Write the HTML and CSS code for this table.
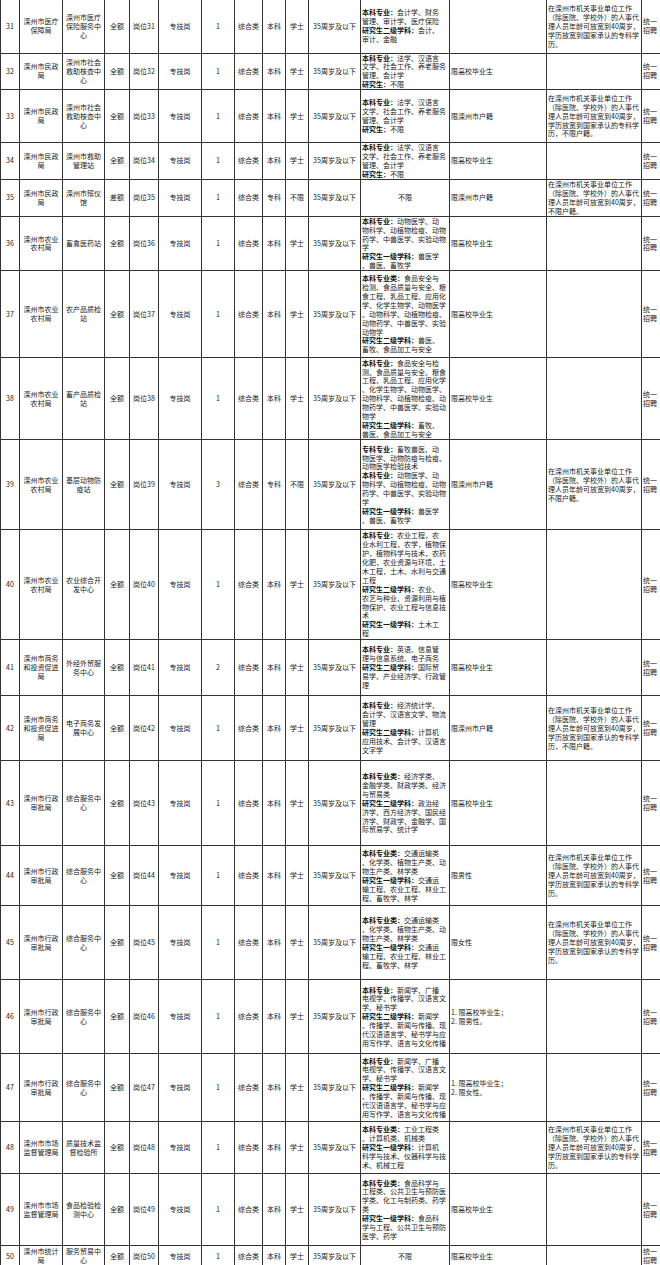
FILE: index.html
```html
<!DOCTYPE html>
<html lang="zh">
<head>
<meta charset="utf-8">
<title>岗位表</title>
<link rel="stylesheet" href="styles.css">
</head>
<body>
<table class="t">
<colgroup>
<col class="w19"><col class="w43"><col class="w42"><col class="w25"><col class="w29"><col class="w43"><col class="w33"><col class="w28"><col class="w23"><col class="w23"><col class="w52"><col class="w89"><col class="w97"><col class="w95"><col class="w19">
</colgroup>
<tr class="h53">
<td>31</td><td>滦州市医疗<br>保障局</td><td>滦州市医疗<br>保险服务中<br>心</td><td>全额</td><td>岗位31</td><td>专技岗</td><td>1</td><td>综合类</td><td>本科</td><td>学士</td><td>35周岁及以下</td>
<td class="l"><b>本科专业：</b>会计学、财务<br>管理、审计学、医疗保险<br><b>研究生二级学科：</b>会计、<br>审计、金融</td>
<td class="l"></td>
<td class="l">在滦州市机关事业单位工作<br>（除医院、学校外）的人事代<br>理人员年龄可放宽到40周岁，<br>学历放宽到国家承认的专科学<br>历。</td>
<td class="l">统一<br>招聘</td>
</tr>
<tr class="h35">
<td>32</td><td>滦州市民政<br>局</td><td>滦州市社会<br>救助核查中<br>心</td><td>全额</td><td>岗位32</td><td>专技岗</td><td>1</td><td>综合类</td><td>本科</td><td>学士</td><td>35周岁及以下</td>
<td class="l"><b>本科专业：</b>法学、汉语言<br>文学、社会工作、养老服务<br>管理、会计学<br><b>研究生：</b>不限</td>
<td class="l">限高校毕业生</td>
<td class="l"></td>
<td class="l">统一<br>招聘</td>
</tr>
<tr class="h53">
<td>33</td><td>滦州市民政<br>局</td><td>滦州市社会<br>救助核查中<br>心</td><td>全额</td><td>岗位33</td><td>专技岗</td><td>1</td><td>综合类</td><td>本科</td><td>学士</td><td>35周岁及以下</td>
<td class="l"><b>本科专业：</b>法学、汉语言<br>文学、社会工作、养老服务<br>管理、会计学<br><b>研究生：</b>不限</td>
<td class="l">限滦州市户籍</td>
<td class="l">在滦州市机关事业单位工作<br>（除医院、学校外）的人事代<br>理人员年龄可放宽到40周岁，<br>学历放宽到国家承认的专科学<br>历，不限户籍。</td>
<td class="l">统一<br>招聘</td>
</tr>
<tr class="h36">
<td>34</td><td>滦州市民政<br>局</td><td>滦州市救助<br>管理站</td><td>全额</td><td>岗位34</td><td>专技岗</td><td>1</td><td>综合类</td><td>本科</td><td>学士</td><td>35周岁及以下</td>
<td class="l"><b>本科专业：</b>法学、汉语言<br>文学、社会工作、养老服务<br>管理、会计学<br><b>研究生：</b>不限</td>
<td class="l">限高校毕业生</td>
<td class="l"></td>
<td class="l">统一<br>招聘</td>
</tr>
<tr class="h37">
<td>35</td><td>滦州市民政<br>局</td><td>滦州市殡仪<br>馆</td><td>差额</td><td>岗位35</td><td>专技岗</td><td>1</td><td>综合类</td><td>专科</td><td>不限</td><td>35周岁及以下</td>
<td>不限</td>
<td class="l">限滦州市户籍</td>
<td class="l">在滦州市机关事业单位工作<br>（除医院、学校外）的人事代<br>理人员年龄可放宽到40周岁，<br>不限户籍。</td>
<td class="l">统一<br>招聘</td>
</tr>
<tr class="h54">
<td>36</td><td>滦州市农业<br>农村局</td><td>畜禽医药站</td><td>全额</td><td>岗位36</td><td>专技岗</td><td>1</td><td>综合类</td><td>本科</td><td>学士</td><td>35周岁及以下</td>
<td class="l"><b>本科专业：</b>动物医学、动<br>物科学、动植物检疫、动物<br>药学、中兽医学、实验动物<br>学<br><b>研究生一级学科：</b>兽医学<br>、兽医、畜牧学</td>
<td class="l">限高校毕业生</td>
<td class="l"></td>
<td class="l">统一<br>招聘</td>
</tr>
<tr class="h87">
<td>37</td><td>滦州市农业<br>农村局</td><td>农产品质检<br>站</td><td>全额</td><td>岗位37</td><td>专技岗</td><td>1</td><td>综合类</td><td>本科</td><td>学士</td><td>35周岁及以下</td>
<td class="l"><b>本科专业类：</b>食品安全与<br>检测、食品质量与安全、粮<br>食工程、乳品工程、应用化<br>学、化学生物学、动物医学<br>、动物科学、动植物检疫、<br>动物药学、中兽医学、实验<br>动物学<br><b>研究生二级学科：</b>兽医、<br>畜牧、食品加工与安全</td>
<td class="l">限高校毕业生</td>
<td class="l"></td>
<td class="l">统一<br>招聘</td>
</tr>
<tr class="h82">
<td>38</td><td>滦州市农业<br>农村局</td><td>畜产品质检<br>站</td><td>全额</td><td>岗位38</td><td>专技岗</td><td>1</td><td>综合类</td><td>本科</td><td>学士</td><td>35周岁及以下</td>
<td class="l"><b>本科专业：</b>食品安全与检<br>测、食品质量与安全、粮食<br>工程、乳品工程、应用化学<br>、化学生物学、动物医学、<br>动物科学、动植物检疫、动<br>物药学、中兽医学、实验动<br>物学<br><b>研究生二级学科：</b>畜牧、<br>兽医、食品加工与安全</td>
<td class="l">限高校毕业生</td>
<td class="l"></td>
<td class="l">统一<br>招聘</td>
</tr>
<tr class="h90">
<td>39</td><td>滦州市农业<br>农村局</td><td>基层动物防<br>疫站</td><td>全额</td><td>岗位39</td><td>专技岗</td><td>3</td><td>综合类</td><td>专科</td><td>不限</td><td>35周岁及以下</td>
<td class="l"><b>专科专业：</b>畜牧兽医、动<br>物医学、动物防疫与检疫、<br>动物医学检验技术<br><b>本科专业：</b>动物医学、动<br>物科学、动植物检疫、动物<br>药学、中兽医学、实验动物<br>学<br><b>研究生一级学科：</b>兽医学<br>、兽医、畜牧学</td>
<td class="l">限滦州市户籍</td>
<td class="l">在滦州市机关事业单位工作<br>（除医院、学校外）的人事代<br>理人员年龄可放宽到40周岁，<br>不限户籍。</td>
<td class="l">统一<br>招聘</td>
</tr>
<tr class="h110">
<td>40</td><td>滦州市农业<br>农村局</td><td>农业综合开<br>发中心</td><td>全额</td><td>岗位40</td><td>专技岗</td><td>1</td><td>综合类</td><td>本科</td><td>学士</td><td>35周岁及以下</td>
<td class="l"><b>本科专业：</b>农业工程，农<br>业水利工程，农学，植物保<br>护，植物科学与技术，农药<br>化肥，农业资源与环境，土<br>木工程，土木、水利与交通<br>工程<br><b>研究生二级学科：</b>农业、<br>农艺与种业、资源利用与植<br>物保护、农业工程与信息技<br>术<br><b>研究生一级学科：</b>土木工<br>程</td>
<td class="l">限高校毕业生</td>
<td class="l"></td>
<td class="l">统一<br>招聘</td>
</tr>
<tr class="h56">
<td>41</td><td>滦州市商务<br>和投资促进<br>局</td><td>外经外贸服<br>务中心</td><td>全额</td><td>岗位41</td><td>专技岗</td><td>2</td><td>综合类</td><td>本科</td><td>学士</td><td>35周岁及以下</td>
<td class="l"><b>本科专业：</b>英语、信息管<br>理与信息系统、电子商务<br><b>研究生二级学科：</b>国际贸<br>易学、产业经济学、行政管<br>理</td>
<td class="l">限高校毕业生</td>
<td class="l"></td>
<td class="l">统一<br>招聘</td>
</tr>
<tr class="h65">
<td>42</td><td>滦州市商务<br>和投资促进<br>局</td><td>电子商务发<br>展中心</td><td>全额</td><td>岗位42</td><td>专技岗</td><td>1</td><td>综合类</td><td>本科</td><td>学士</td><td>35周岁及以下</td>
<td class="l"><b>本科专业：</b>经济统计学、<br>会计学、汉语言文学、物流<br>管理<br><b>研究生二级学科：</b>计算机<br>应用技术、会计学、汉语言<br>文字学</td>
<td class="l">限滦州市户籍</td>
<td class="l">在滦州市机关事业单位工作<br>（除医院、学校外）的人事代<br>理人员年龄可放宽到40周岁，<br>学历放宽到国家承认的专科学<br>历，不限户籍。</td>
<td class="l">统一<br>招聘</td>
</tr>
<tr class="h85">
<td>43</td><td>滦州市行政<br>审批局</td><td>综合服务中<br>心</td><td>全额</td><td>岗位43</td><td>专技岗</td><td>1</td><td>综合类</td><td>本科</td><td>学士</td><td>35周岁及以下</td>
<td class="l"><b>本科专业类：</b>经济学类、<br>金融学类、财政学类、经济<br>与贸易类<br><b>研究生二级学科：</b>政治经<br>济学、西方经济学、国民经<br>济学、财政学、金融学、国<br>际贸易学、统计学</td>
<td class="l">限高校毕业生</td>
<td class="l"></td>
<td class="l">统一<br>招聘</td>
</tr>
<tr class="h60">
<td>44</td><td>滦州市行政<br>审批局</td><td>综合服务中<br>心</td><td>全额</td><td>岗位44</td><td>专技岗</td><td>1</td><td>综合类</td><td>本科</td><td>学士</td><td>35周岁及以下</td>
<td class="l"><b>本科专业类：</b>交通运输类<br>、化学类、植物生产类、动<br>物生产类、林学类<br><b>研究生一级学科：</b>交通运<br>输工程、农业工程、林业工<br>程、畜牧学、林学</td>
<td class="l">限男性</td>
<td class="l">在滦州市机关事业单位工作<br>（除医院、学校外）的人事代<br>理人员年龄可放宽到40周岁，<br>学历放宽到国家承认的专科学<br>历。</td>
<td class="l">统一<br>招聘</td>
</tr>
<tr class="h74">
<td>45</td><td>滦州市行政<br>审批局</td><td>综合服务中<br>心</td><td>全额</td><td>岗位45</td><td>专技岗</td><td>1</td><td>综合类</td><td>本科</td><td>学士</td><td>35周岁及以下</td>
<td class="l"><b>本科专业类：</b>交通运输类<br>、化学类、植物生产类、动<br>物生产类、林学类<br><b>研究生一级学科：</b>交通运<br>输工程、农业工程、林业工<br>程、畜牧学、林学</td>
<td class="l">限女性</td>
<td class="l">在滦州市机关事业单位工作<br>（除医院、学校外）的人事代<br>理人员年龄可放宽到40周岁，<br>学历放宽到国家承认的专科学<br>历。</td>
<td class="l">统一<br>招聘</td>
</tr>
<tr class="h74">
<td>46</td><td>滦州市行政<br>审批局</td><td>综合服务中<br>心</td><td>全额</td><td>岗位46</td><td>专技岗</td><td>1</td><td>综合类</td><td>本科</td><td>学士</td><td>35周岁及以下</td>
<td class="l"><b>本科专业：</b>新闻学、广播<br>电视学、传播学、汉语言文<br>学、秘书学<br><b>研究生二级学科：</b>新闻学<br>、传播学、新闻与传播、现<br>代汉语语言学、秘书学与应<br>用写作学、语言与文化传播</td>
<td class="l">1. 限高校毕业生；<br>2. 限男性。</td>
<td class="l"></td>
<td class="l">统一<br>招聘</td>
</tr>
<tr class="h68">
<td>47</td><td>滦州市行政<br>审批局</td><td>综合服务中<br>心</td><td>全额</td><td>岗位47</td><td>专技岗</td><td>1</td><td>综合类</td><td>本科</td><td>学士</td><td>35周岁及以下</td>
<td class="l"><b>本科专业：</b>新闻学、广播<br>电视学、传播学、汉语言文<br>学、秘书学<br><b>研究生二级学科：</b>新闻学<br>、传播学、新闻与传播、现<br>代汉语语言学、秘书学与应<br>用写作学、语言与文化传播</td>
<td class="l">1. 限高校毕业生；<br>2. 限女性。</td>
<td class="l"></td>
<td class="l">统一<br>招聘</td>
</tr>
<tr class="h52">
<td>48</td><td>滦州市市场<br>监督管理局</td><td>质量技术监<br>督检验所</td><td>全额</td><td>岗位48</td><td>专技岗</td><td>1</td><td>综合类</td><td>本科</td><td>学士</td><td>35周岁及以下</td>
<td class="l"><b>本科专业类：</b>工业工程类<br>、计算机类、机械类<br><b>研究生一级学科：</b>计算机<br>科学与技术、仪器科学与技<br>术、机械工程</td>
<td class="l"></td>
<td class="l">在滦州市机关事业单位工作<br>（除医院、学校外）的人事代<br>理人员年龄可放宽到40周岁，<br>学历放宽到国家承认的专科学<br>历。</td>
<td class="l">统一<br>招聘</td>
</tr>
<tr class="h72">
<td>49</td><td>滦州市市场<br>监督管理局</td><td>食品检验检<br>测中心</td><td>全额</td><td>岗位49</td><td>专技岗</td><td>1</td><td>综合类</td><td>本科</td><td>学士</td><td>35周岁及以下</td>
<td class="l"><b>本科专业类：</b>食品科学与<br>工程类、公共卫生与预防医<br>学类、化工与制药类、药学<br>类<br><b>研究生一级学科：</b>食品科<br>学与工程、公共卫生与预防<br>医学、药学</td>
<td class="l">限高校毕业生</td>
<td class="l"></td>
<td class="l">统一<br>招聘</td>
</tr>
<tr class="h21">
<td>50</td><td>滦州市统计<br>局</td><td>服务贸易中<br>心</td><td>全额</td><td>岗位50</td><td>专技岗</td><td>1</td><td>综合类</td><td>本科</td><td>学士</td><td>35周岁及以下</td>
<td>不限</td>
<td class="l">限高校毕业生</td>
<td class="l"></td>
<td class="l">统一<br>招聘</td>
</tr>
</table>
</body>
</html>
```

FILE: styles.css
```css
html, body {
  margin: 0;
  padding: 0;
  background: #ffffff;
}

.t {
  border-collapse: collapse;
  table-layout: fixed;
  width: 660px;
  font-family: "Noto Sans CJK SC", "Noto Sans", sans-serif;
  font-size: 7px;
  line-height: 8.9px;
  color: #222222;
}

.t td {
  border: 1px solid #333333;
  padding: 0 1px;
  text-align: center;
  vertical-align: middle;
  white-space: nowrap;
  overflow: hidden;
}

.t tr:first-child td {
  border-top: none;
}

.t td.l {
  text-align: left;
}

.t b {
  font-weight: 700;
  color: #111111;
}

.w19 { width: 19px; }
.w23 { width: 23px; }
.w25 { width: 25px; }
.w28 { width: 28px; }
.w29 { width: 29px; }
.w33 { width: 33px; }
.w42 { width: 42px; }
.w43 { width: 43px; }
.w52 { width: 52px; }
.w89 { width: 89px; }
.w95 { width: 95px; }
.w97 { width: 97px; }

.h21 { height: 21px; }
.h35 { height: 35px; }
.h36 { height: 36px; }
.h37 { height: 37px; }
.h52 { height: 52px; }
.h53 { height: 53px; }
.h54 { height: 54px; }
.h56 { height: 56px; }
.h60 { height: 60px; }
.h65 { height: 65px; }
.h68 { height: 68px; }
.h72 { height: 72px; }
.h74 { height: 74px; }
.h82 { height: 82px; }
.h85 { height: 85px; }
.h87 { height: 87px; }
.h90 { height: 90px; }
.h110 { height: 110px; }
```
